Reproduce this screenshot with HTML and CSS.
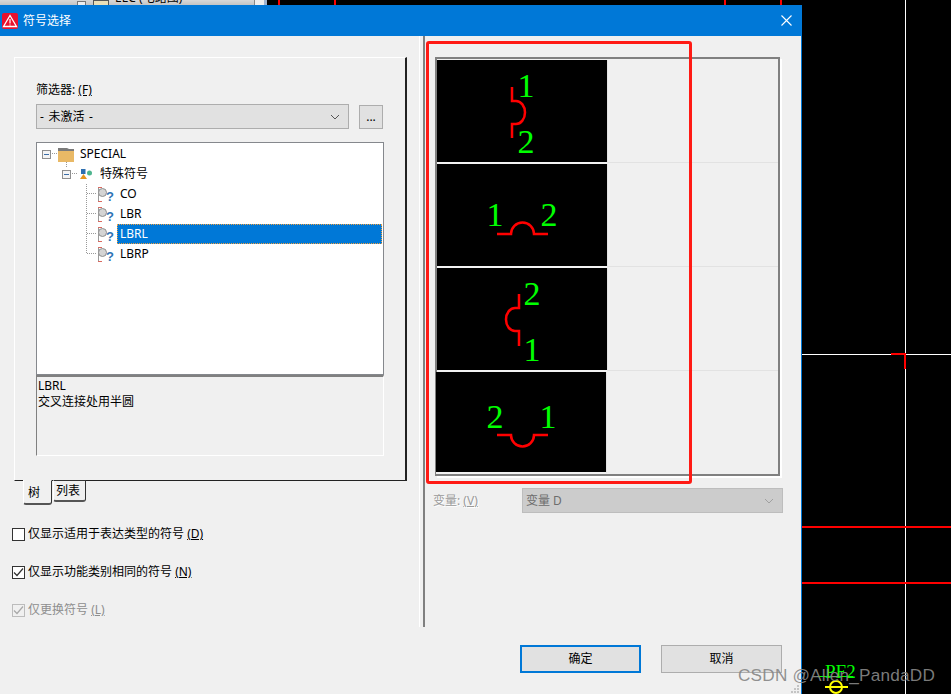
FILE: index.html
```html
<!DOCTYPE html>
<html lang="zh">
<head>
<meta charset="utf-8">
<title>符号选择</title>
<link rel="stylesheet" href="styles.css">
</head>
<body>
<svg class="defs" width="0" height="0" aria-hidden="true">
  <symbol id="q" viewBox="0 0 17 18">
    <path d="M1.500 2.500V16.500" fill="none" stroke="#9a9a9a" stroke-width="1"/>
    <path d="M1 2.500H5M1 16.500H5" fill="none" stroke="#d9695f" stroke-width="1"/>
    <circle cx="5.500" cy="7.500" r="4" fill="#d4d4d4" stroke="#8f8f8f"/>
    <text x="9" y="16" class="q-mark">?</text>
  </symbol>
</svg>
<div class="desktop">
  <div class="app-strip">
    <span class="strip-box"></span><span class="strip-icon"></span><span class="strip-text">EEC (电路图)</span>
    <span class="strip-scroll"></span>
  </div>
  <i class="line red v v1"></i><i class="line red v v2"></i><i class="line red v v3"></i><i class="line red v v4"></i>
  <i class="line white v v5"></i><i class="line white h h1"></i>
  <i class="line red h h2"></i><i class="line red h h3"></i>
  <i class="line red h h4"></i><i class="line red v v6"></i>
  <span class="pf">PF2</span><i class="line green h h5"></i>
  <svg class="yellow-sym" width="30" height="14" viewBox="0 0 30 14"><circle cx="13" cy="7" r="6" fill="none" stroke="#ff0" stroke-width="2"/><path d="M2 7H25" stroke="#ff0" stroke-width="2"/></svg>
</div>

<div class="dialog">
  <header class="titlebar">
    <svg class="app-icon" width="16" height="16" viewBox="0 0 16 16"><rect width="16" height="16" rx="2" fill="#e8112d"/><path d="M8 2.500L14.500 13.500H1.500Z" fill="none" stroke="#fff" stroke-width="1.300"/><path d="M8 6V10.500M8 11.500V12.500" stroke="#fff" stroke-width="1.200"/></svg>
    <span class="title-text">符号选择</span>
    <svg class="close" width="11" height="11" viewBox="0 0 11 11"><path d="M.5.500L10.500 10.500M10.500.500L.5 10.500" stroke="#fff" stroke-width="1.100"/></svg>
  </header>

  <div class="main">
    <section class="left">
      <div class="group">
        <label class="field-label">筛选器: <u>(F)</u></label>
        <div class="filter-row">
          <div class="combo filter-combo"><span class="combo-text">- 未激活 -</span>
            <svg class="chev" width="10" height="6" viewBox="0 0 10 6"><path d="M1 1L5 5L9 1" fill="none" stroke="#555" stroke-width="1"/></svg></div>
          <button class="dots">...</button>
        </div>
        <div class="tree">
          <svg class="tree-lines" width="100" height="120" viewBox="0 0 100 120">
            <path d="M15 10.500H21M35 30.500H41M29.500 19V25M49.500 41V111M50 50.500H60M50 70.500H60M50 90.500H60M50 110.500H60" fill="none" stroke="#999" stroke-dasharray="1 1"/>
          </svg>
          <div class="row lvl0"><span class="exp"></span>
            <svg class="folder" width="16" height="14" viewBox="0 0 16 14"><path d="M0 0H9L11 1H16V3H0Z" fill="#7a7a7a"/><rect y="3" width="16" height="11" fill="#e9b966"/></svg>
            <span class="label">SPECIAL</span></div>
          <div class="row lvl1"><span class="exp"></span>
            <svg class="shapes" width="13" height="12" viewBox="0 0 13 12"><rect x="1" y="1" width="4.500" height="5" fill="#2e6fb0"/><circle cx="9.500" cy="5" r="2.500" fill="#4fb58f"/><path d="M0 11L3.500 6L7 11Z" fill="#e8951d"/></svg>
            <span class="label">特殊符号</span></div>
          <div class="row lvl2"><svg class="sym" width="17" height="18"><use href="#q"/></svg><span class="label">CO</span></div>
          <div class="row lvl2"><svg class="sym" width="17" height="18"><use href="#q"/></svg><span class="label">LBR</span></div>
          <div class="row lvl2"><svg class="sym" width="17" height="18"><use href="#q"/></svg><span class="label selected">LBRL</span></div>
          <div class="row lvl2"><svg class="sym" width="17" height="18"><use href="#q"/></svg><span class="label">LBRP</span></div>
        </div>
        <div class="desc">LBRL<br>交叉连接处用半圆</div>
      </div>
      <div class="tabs">
        <span class="tab active">树</span><span class="tab">列表</span>
      </div>
      <div class="checks">
        <div class="check"><span class="box"></span><span>仅显示适用于表达类型的符号 <u>(D)</u></span></div>
        <div class="check"><span class="box"><svg width="11" height="11" viewBox="0 0 11 11"><path d="M1 5.500L4 8.500L10 1.500" fill="none" stroke="#333" stroke-width="1.200"/></svg></span><span>仅显示功能类别相同的符号 <u>(N)</u></span></div>
        <div class="check disabled"><span class="box"><svg width="11" height="11" viewBox="0 0 11 11"><path d="M1 5.500L4 8.500L10 1.500" fill="none" stroke="#a8a8a8" stroke-width="1.200"/></svg></span><span>仅更换符号 <u>(L)</u></span></div>
      </div>
    </section>

    <div class="splitter"></div>

    <section class="right">
      <div class="gallery">
        <div class="g-row">
          <div class="cell"><svg width="170" height="102" viewBox="0 0 170 102">
            <path class="wire" d="M75 27V41H79A9 11.500 0 0 1 79 64H75V78"/>
            <text class="pin" x="89" y="37">1</text><text class="pin" x="89" y="93">2</text></svg></div>
          <div class="rest"></div>
        </div>
        <div class="g-row">
          <div class="cell"><svg width="170" height="102" viewBox="0 0 170 102">
            <path class="wire" d="M60 70H74A11.500 11.500 0 0 1 97 70H111"/>
            <text class="pin" x="58" y="62">1</text><text class="pin" x="112" y="62">2</text></svg></div>
          <div class="rest"></div>
        </div>
        <div class="g-row">
          <div class="cell"><svg width="170" height="102" viewBox="0 0 170 102">
            <path class="wire" d="M82 26V40H78A9 11.500 0 0 0 78 63H82V78"/>
            <text class="pin" x="95" y="37">2</text><text class="pin" x="95" y="93">1</text></svg></div>
          <div class="rest"></div>
        </div>
        <div class="g-row last">
          <div class="cell"><svg width="170" height="100" viewBox="0 0 170 100">
            <path class="wire" d="M61 63H75A11.500 11.500 0 0 0 98 63H112"/>
            <text class="pin" x="59" y="56">2</text><text class="pin" x="112" y="56">1</text></svg></div>
          <div class="rest"></div>
        </div>
      </div>
      <div class="variant">
        <span class="variant-label">变量: <u>(V)</u></span>
        <div class="combo variant-combo"><span>变量 D</span>
          <svg class="chev" width="10" height="6" viewBox="0 0 10 6"><path d="M1 1L5 5L9 1" fill="none" stroke="#a0a0a0" stroke-width="1"/></svg></div>
      </div>
    </section>
  </div>

  <footer class="footer">
    <button class="btn primary">确定</button>
    <button class="btn">取消</button>
    <svg class="grip" width="10" height="10" viewBox="0 0 10 10"><path d="M7 1h2v2H7zM4 4h2v2H4zM7 4h2v2H7zM1 7h2v2H1zM4 7h2v2H4zM7 7h2v2H7z" fill="#c4c4c4"/></svg>
  </footer>
</div>

<div class="annotation"></div>
<div class="watermark">CSDN @Allen_PandaDD</div>
</body>
</html>
```
FILE: styles.css
```css
* { box-sizing: border-box; }
html, body { margin: 0; padding: 0; }
body {
  width: 951px; height: 694px; overflow: hidden; position: relative;
  background: #000;
  font: 12px/16px "Noto Sans", "Noto Sans CJK SC", sans-serif;
  color: #000;
}
.defs { position: absolute; }
u { text-underline-offset: 1px; }

/* CAD canvas behind the dialog */
.desktop { position: absolute; inset: 0; overflow: hidden; }
.app-strip { position: absolute; left: 0; top: 0; width: 267px; height: 5px; background: linear-gradient(#d8d8d8, #c4c4c4); overflow: hidden; }
.strip-box { position: absolute; left: 77px; top: 1px; width: 9px; height: 9px; border: 1px solid #777; background: #eee; }
.strip-icon { position: absolute; left: 93px; top: 0; width: 16px; height: 12px; border: 1px solid #555; background: #eadfb8; }
.strip-text { position: absolute; left: 115px; top: -10px; white-space: nowrap; }
.strip-scroll { position: absolute; left: 254px; top: 0; width: 13px; height: 5px; border-left: 1px solid #888; border-right: 3px solid #9fb4d0; background: #eee; }
.line { position: absolute; display: block; }
.red { background: #f00; }
.white { background: #fff; }
.green { background: #0f0; }
.v { width: 1px; }
.h { height: 1px; }
.v1 { left: 278px; top: 0; height: 6px; width: 2px; }
.v2 { left: 334px; top: 0; height: 6px; width: 2px; }
.v3 { left: 724px; top: 0; height: 6px; width: 2px; }
.v4 { left: 780px; top: 0; height: 6px; width: 2px; }
.v5 { left: 905px; top: 0; height: 694px; }
.h1 { left: 802px; top: 354px; width: 149px; }
.h2 { left: 802px; top: 526px; width: 149px; height: 2px; }
.h3 { left: 802px; top: 582px; width: 149px; height: 2px; }
.h4 { left: 891px; top: 353px; width: 15px; height: 2px; }
.v6 { left: 904px; top: 353px; width: 2px; height: 16px; }
.pf { position: absolute; left: 825px; top: 662px; color: #0f0; font: 19px/20px "Liberation Serif", serif; }
.h5 { left: 817px; top: 676px; width: 36px; }
.yellow-sym { position: absolute; left: 823px; top: 680px; }

/* Dialog window */
.dialog {
  position: absolute; left: 0; top: 5px; width: 802px; height: 689px;
  background: #f0f0f0; border-right: 1px solid #0078d7;
  display: flex; flex-direction: column;
}
.titlebar { height: 31px; width: 802px; flex: none; background: #0078d7; color: #fff; display: flex; align-items: center; padding-left: 2px; }
.app-icon { flex: none; }
.title-text { margin-left: 5px; font-size: 12px; }
.close { margin-left: auto; margin-right: 10px; }

.main { height: 591px; flex: none; display: flex; }
.left { width: 419px; padding: 21px 0 0 12px; flex: none; }
.splitter { width: 6px; flex: none; border-left: 1px solid #fff; border-right: 2px solid #808080; }

.group {
  margin-left: 2px; width: 393px; height: 424px;
  border-top: 1px solid #fff; border-left: 1px solid #fff;
  border-right: 2px solid #222; border-bottom: 1px solid #222;
  padding: 24px 0 0 21px;
}
.field-label { display: block; height: 16px; }
.filter-row { display: flex; gap: 10px; margin-top: 6px; align-items: flex-end; }
.combo { display: flex; align-items: center; justify-content: space-between; height: 25px; padding: 0 8px 0 3px; border: 1px solid #adadad; background: #e1e1e1; }
.combo-text { word-spacing: 1.500px; }
.filter-combo { width: 313px; }
.dots { width: 24px; height: 24px; padding: 0; border: 1px solid #adadad; background: #e1e1e1; font: 12px/1 "Noto Sans", sans-serif; color: #000; }

.tree { position: relative; width: 348px; height: 233px; margin-top: 13px; padding-top: 1px; border: 1px solid #85888d; background: #fff; }
.tree-lines { position: absolute; left: 0; top: 0; pointer-events: none; }
.row { display: flex; align-items: center; height: 20px; }
.lvl0 { padding-left: 5px; }
.lvl1 { padding-left: 25px; }
.lvl2 { padding-left: 60px; padding-right: 1px; }
.exp { position: relative; width: 9px; height: 9px; flex: none; margin-top: 1px; border: 1px solid #8e8e8e; background: #f4f4f4; }
.exp::after { content: ""; position: absolute; left: 1px; right: 1px; top: 3px; height: 1px; background: #3c6ea8; }
.folder { margin-left: 7px; margin-right: 3px; margin-top: 2px; flex: none; }
.shapes { margin-left: 9px; margin-right: 4px; flex: none; }
.sym { flex: none; margin-right: 3px; }
.q-mark { font: bold 13px "Liberation Sans", sans-serif; fill: #2f74b5; }
.label { padding: 0 3px; height: 20px; line-height: 20px; }
.selected { flex: 1; background: #0078d7; color: #fff; outline: 1px dotted #f0a040; outline-offset: -1px; }

.desc { width: 348px; height: 81px; padding: 1px 1px; border: 1px solid #fff; border-top-color: #808080; border-left-color: #808080; border-top-width: 2px; }

.tabs { display: flex; margin-left: 11px; align-items: flex-start; margin-top: -1px; position: relative; }
.tab { height: 22px; width: 33px; margin-left: 1px; padding-left: 2px; line-height: 20px; background: #f0f0f0; border: 1px solid #fff; border-right: 1px solid #333; border-bottom: 2px solid #555; border-top: 1px solid #333; border-radius: 0 0 3px 3px; }
.tab.active { width: 29px; height: 25px; margin-left: 0; padding-left: 4px; border-top-color: #f0f0f0; line-height: 24px; }

.checks { margin-top: 19px; display: flex; flex-direction: column; gap: 18px; }
.check { display: flex; align-items: center; height: 20px; }
.box { width: 13px; height: 13px; flex: none; margin-right: 3px; background: #fff; border: 1px solid #333; display: flex; align-items: center; justify-content: center; }
.disabled { color: #8e8e8e; }
.disabled .box { border-color: #bcbcbc; background: #f0f0f0; }

.right { flex: 1; padding: 21px 0 0 10px; }
.gallery { width: 345px; height: 419px; padding-top: 1px; border: 2px solid #808080; box-shadow: 2px 2px 0 #fff; }
.g-row { display: flex; height: 104px; }
.g-row.last { height: 102px; }
.cell { width: 171px; flex: none; background: #000; background-clip: padding-box; border-right: 1px solid #e4e4e4; border-bottom: 2px solid #f2f2f2; }
.cell svg { display: block; }
.rest { flex: 1; height: 103px; border-bottom: 1px solid #e2e2e2; }
.g-row.last .rest { border-bottom: 0; }
.g-row.last .cell { margin-left: -1px; }
.wire { fill: none; stroke: #f00; stroke-width: 2.500; }
.pin { font: 34px "Liberation Serif", serif; fill: #0f0; text-anchor: middle; }

.variant { display: flex; align-items: center; margin: 12px 0 0 -2px; }
.variant-label { width: 89px; color: #9a9a9a; text-shadow: 1px 1px 0 #fff; }
.variant-combo { width: 261px; border-color: #bdbdbd; background: #cccccc; color: #6d6d6d; }

.footer { position: relative; flex: 1; display: flex; justify-content: flex-end; align-items: flex-start; gap: 20px; padding: 18px 19px 0 0; }
.btn { width: 121px; height: 28px; padding: 0; border: 1px solid #adadad; background: #e1e1e1; font: 12px/1 "Noto Sans", "Noto Sans CJK SC", sans-serif; color: #000; }
.btn.primary { border: 2px solid #0078d7; }
.grip { position: absolute; right: 1px; bottom: 0; }

/* Red markup drawn over the screenshot */
.annotation { position: absolute; left: 426px; top: 41px; width: 266px; height: 443px; border: 3px solid #ff1a14; border-radius: 3px; }
.watermark { position: absolute; left: 738px; top: 664px; font: 17.200px/22px "Liberation Sans", sans-serif; color: rgba(135,135,135,.92); white-space: nowrap; letter-spacing: .2px; }
```
